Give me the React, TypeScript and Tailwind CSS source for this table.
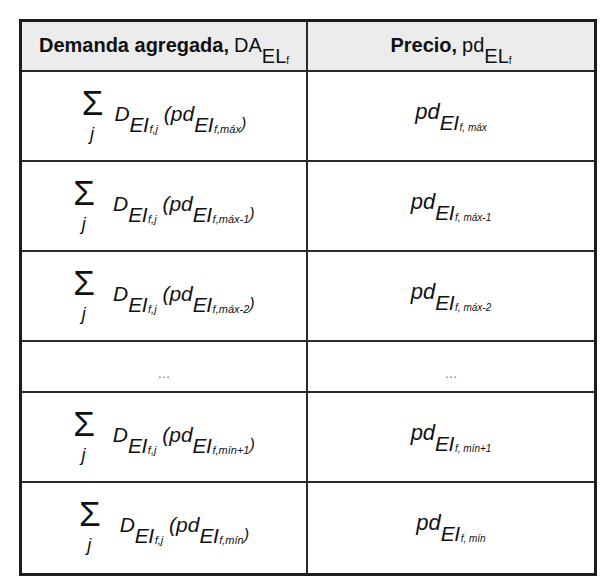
const font = "font-['Liberation_Sans',Arial,sans-serif]";

function Sub({ main, small }: { main: string; small: string }) {
  return (
    <span className="tracking-[-0.5px] align-[-11px]">
      {main}
      <span className="text-[11px] tracking-normal align-[-1px] ml-[1px]">{small}</span>
    </span>
  );
}

function SumCell({ k, gap }: { k: string; gap: string }) {
  return (
    <div className="flex items-start justify-center pt-[13px]">
      <div className="flex flex-col items-center">
        <span className="text-[35px] leading-none">Σ</span>
        <span className="text-[18px] leading-none italic mt-[5px] -ml-[1px]">j</span>
      </div>
      <div className={`${gap} mt-[18px] italic text-[21px] leading-none whitespace-nowrap`}>
        D<Sub main="EI" small="f,j" /> (pd<Sub main="EI" small={`f,${k}`} />
        <span className="text-[16px] align-[-8px]">)</span>
      </div>
    </div>
  );
}

function PriceCell({ k }: { k: string }) {
  return (
    <div className="pt-[29px] italic text-[22px] leading-none whitespace-nowrap">
      pd
      <span className="text-[21px] tracking-[-0.5px] align-[-11px]">
        EI<span className="text-[10px] tracking-normal align-[-1px] ml-[1px]">f, {k}</span>
      </span>
    </div>
  );
}

const rows = [
  { k: "máx", gap: "ml-[11px]" },
  { k: "máx-1", gap: "ml-[18px]" },
  { k: "máx-2", gap: "ml-[18px]" },
  null,
  { k: "mín+1", gap: "ml-[18px]" },
  { k: "mín", gap: "ml-[19px]" },
];

export default function App() {
  return (
    <div className={`${font} bg-white w-[609px] h-[585px] pt-[19px] pl-[19px] text-[#111]`}>
      <div className="w-[578px] border-[3px] border-[#1c1c1c]">
        <div className="flex h-[50px] border-b-2 border-[#2a2a2a] bg-[#ececec]">
          <div className="w-[286px] border-r-2 border-[#2a2a2a] flex items-start justify-center pt-[13px] text-[20px] leading-none whitespace-nowrap">
            <span className="font-bold">Demanda agregada,</span>
            <span className="ml-[5px]">
              DA
              <span className="align-[-11px]">
                EL<span className="text-[10px] align-[-1px]">f</span>
              </span>
            </span>
          </div>
          <div className="flex-1 flex items-start justify-center pt-[13px] text-[20px] leading-none whitespace-nowrap">
            <span className="font-bold">Precio,</span>
            <span className="ml-[5px]">
              pd
              <span className="align-[-11px]">
                EL<span className="text-[10px] align-[-1px]">f</span>
              </span>
            </span>
          </div>
        </div>
        {rows.map((r, i) => {
          const last = i === rows.length - 1;
          if (!r) {
            return (
              <div key={i} className="flex h-[51px] border-b-2 border-[#2a2a2a] text-[15px] leading-none text-[#888]">
                <div className="w-[286px] border-r-2 border-[#2a2a2a] flex items-start justify-center pt-[23px]">...</div>
                <div className="flex-1 flex items-start justify-center pt-[23px]">...</div>
              </div>
            );
          }
          return (
            <div key={i} className={`flex h-[90px] ${last ? "" : "border-b-2"} border-[#2a2a2a]`}>
              <div className="w-[286px] border-r-2 border-[#2a2a2a] flex justify-center">
                <SumCell k={r.k} gap={r.gap} />
              </div>
              <div className="flex-1 flex justify-center">
                <PriceCell k={r.k} />
              </div>
            </div>
          );
        })}
      </div>
    </div>
  );
}
